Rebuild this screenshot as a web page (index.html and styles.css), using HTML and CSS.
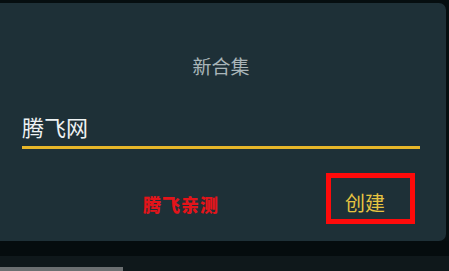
FILE: index.html
```html
<!DOCTYPE html>
<html lang="zh">
<head>
<meta charset="utf-8">
<link rel="stylesheet" href="styles.css">
</head>
<body>
<div class="screen">
  <div class="dialog">
    <div class="title">新合集</div>
    <div class="field">腾飞网</div>
    <div class="actions">
      <div class="btn-box"><span class="btn">创建</span></div>
    </div>
    <div class="watermark">腾飞亲测</div>
  </div>
  <div class="gap"></div>
  <div class="bottom">
    <div class="bar"></div>
  </div>
</div>
</body>
</html>
```
FILE: styles.css
```css
html, body {
  margin: 0;
  padding: 0;
  background: #060e10;
  width: 449px;
  height: 271px;
  overflow: hidden;
  font-family: "Noto Sans CJK SC", "Noto Sans", sans-serif;
}
.screen {
  display: flex;
  flex-direction: column;
  width: 449px;
  height: 271px;
}
.dialog {
  position: relative;
  margin-top: 3px;
  width: 446px;
  height: 238px;
  box-sizing: border-box;
  background: #1e3037;
  border-radius: 0 7px 7px 0;
  padding: 0 26px 0 22px;
  display: flex;
  flex-direction: column;
}
.title {
  margin-top: 52px;
  text-align: center;
  font-size: 19px;
  line-height: 22px;
  color: #a9b5b9;
}
.field {
  margin-top: 37px;
  font-size: 22px;
  line-height: 24px;
  color: #eef2f3;
  padding-bottom: 8px;
  border-bottom: 3px solid #e7b629;
}
.actions {
  margin-top: 24px;
  display: flex;
  justify-content: flex-end;
  padding-right: 5px;
}
.btn-box {
  width: 89px;
  height: 51px;
  box-sizing: border-box;
  border: 5px solid #ff0a0a;
  padding: 13px 0 0 14px;
}
.btn {
  font-size: 20px;
  line-height: 24px;
  color: #e6c441;
}
.watermark {
  position: absolute;
  left: 143px;
  top: 191px;
  font-size: 18px;
  line-height: 20px;
  font-weight: 900;
  color: #e3141a;
  letter-spacing: 1px;
}
.gap {
  height: 15px;
  background: #050c0e;
}
.bottom {
  flex: 1;
  background: #0f181b;
  display: flex;
  align-items: flex-end;
}
.bar {
  width: 123px;
  height: 4px;
  background: #6b6f71;
}
```
